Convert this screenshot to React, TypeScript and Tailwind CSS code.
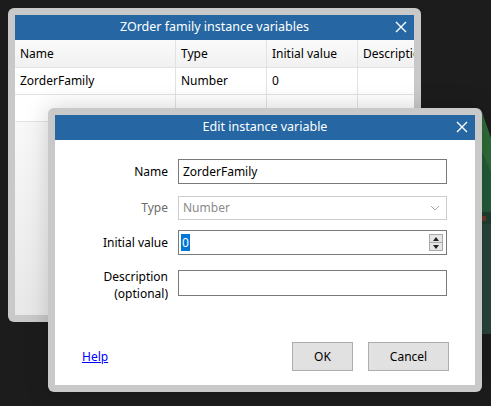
import React from "react";

const font = { fontFamily: '"Noto Sans", "Segoe UI", sans-serif' };

const CloseX: React.FC = () => (
  <svg width="12" height="12" viewBox="0 0 12 12" className="shrink-0">
    <path d="M1 1 L11 11 M11 1 L1 11" stroke="white" strokeWidth="1.4" />
  </svg>
);

const TitleBar: React.FC<{ title: string }> = ({ title }) => (
  <div className="relative h-[25px] bg-[#2667a3] flex items-center justify-center text-white text-[12.5px]">
    <span>{title}</span>
    <div className="absolute right-[7px] top-[6px]">
      <CloseX />
    </div>
  </div>
);

const columns = [
  { label: "Name", w: "w-[161px]" },
  { label: "Type", w: "w-[91px]" },
  { label: "Initial value", w: "w-[91px]" },
  { label: "Description", w: "w-[80px]" },
];

const rows = [["ZorderFamily", "Number", "0", ""], ["", "", "", ""]];

const VariablesWindow: React.FC = () => (
  <div className="absolute left-[8px] top-[8px] w-[413px] h-[314px] bg-[#c9c9c9] rounded-[6px] p-[7px]">
    <div className="h-full flex flex-col bg-white overflow-hidden">
      <TitleBar title="ZOrder family instance variables" />
      <div className="flex-1 flex flex-col bg-gradient-to-b from-white to-[#e8e8e8] overflow-hidden">
        <div className="flex h-[28px] bg-gradient-to-b from-[#fafafa] to-[#f1f1f1] border-b border-[#e2e2e2] text-[12px] text-black">
          {columns.map((c) => (
            <div key={c.label} className={`${c.w} shrink-0 flex items-center pl-[5px] border-r border-[#e2e2e2] whitespace-nowrap overflow-hidden`}>
              {c.label}
            </div>
          ))}
        </div>
        {rows.map((r, i) => (
          <div key={i} className="flex h-[27px] bg-white border-b border-[#e2e2e2] text-[12px] text-black">
            {r.map((cell, j) => (
              <div key={j} className={`${columns[j].w} shrink-0 flex items-center pl-[5px] border-r border-[#e2e2e2]`}>
                {cell}
              </div>
            ))}
          </div>
        ))}
      </div>
    </div>
  </div>
);

const Spinner: React.FC = () => (
  <div className="absolute right-[3px] top-[3px] w-[14px] h-[17px] flex flex-col border border-[#a9a9a9] bg-[#e6e6e6]">
    <div className="flex-1 flex items-center justify-center border-b border-[#a9a9a9]">
      <svg width="6" height="4" viewBox="0 0 6 4"><path d="M0 4 L3 0 L6 4Z" fill="#222" /></svg>
    </div>
    <div className="flex-1 flex items-center justify-center">
      <svg width="6" height="4" viewBox="0 0 6 4"><path d="M0 0 L6 0 L3 4Z" fill="#222" /></svg>
    </div>
  </div>
);

const EditDialog: React.FC = () => (
  <div className="absolute left-[48px] top-[108px] w-[434px] h-[284px] bg-[#c9c9c9] rounded-[6px] p-[7px] shadow-[0_0_24px_rgba(0,0,0,0.18)]">
    <div className="h-full flex flex-col bg-white text-[12px] text-black">
      <TitleBar title="Edit instance variable" />
      <div className="grid grid-cols-[113px_269px] gap-x-[10px] pt-[19px]">
        <div className="h-[25px] flex items-center justify-end">Name</div>
        <div className="h-[25px] border border-[#7a7a7a] flex items-center pl-[4px]">ZorderFamily</div>

        <div className="h-[24px] mt-[12px] flex items-center justify-end text-[#6d6d6d]">Type</div>
        <div className="h-[24px] mt-[12px] border border-[#cccccc] flex items-center justify-between pl-[4px] pr-[6px] text-[#8a8a8a]">
          <span>Number</span>
          <svg width="10" height="6" viewBox="0 0 10 6"><path d="M1 1 L5 5 L9 1" stroke="#a8a8a8" fill="none" strokeWidth="1" /></svg>
        </div>

        <div className="h-[25px] mt-[10px] flex items-center justify-end">Initial value</div>
        <div className="relative h-[25px] mt-[10px] border border-[#7a7a7a] flex items-center pl-[2px]">
          <span className="bg-[#0078d7] text-white px-[1px] leading-[17px]">0</span>
          <Spinner />
        </div>

        <div className="mt-[13px] flex flex-col items-end leading-[17px]">
          <span>Description</span>
          <span>(optional)</span>
        </div>
        <div className="h-[26px] mt-[15px] border border-[#7a7a7a]" />
      </div>
      <div className="flex-1" />
      <div className="flex items-center pl-[27px] pr-[26px] pb-[14px]">
        <span className="text-[#0000ff] underline text-[12px]">Help</span>
        <div className="flex-1" />
        <button className="w-[61px] h-[29px] bg-[#e1e1e1] border border-[#adadad] text-[12px]">OK</button>
        <button className="ml-[15px] w-[81px] h-[29px] bg-[#e1e1e1] border border-[#adadad] text-[12px]">Cancel</button>
      </div>
    </div>
  </div>
);

const App: React.FC = () => (
  <div className="relative w-[491px] h-[406px] bg-[#1c1c1c] overflow-hidden" style={font}>
    <svg className="absolute left-[482px] top-[112px]" width="9" height="222" viewBox="0 0 9 222">
      <path d="M0 0 L9 26 L9 100 L0 100Z" fill="#2f6b38" />
      <path d="M0 40 L9 60 L9 100 L0 100Z" fill="#245a3a" />
      <rect x="0" y="100" width="9" height="12" fill="#1e3e30" />
      <rect x="0" y="104" width="4" height="5" fill="#6a3a28" />
      <rect x="0" y="112" width="9" height="110" fill="#27433a" />
    </svg>
    <VariablesWindow />
    <EditDialog />
  </div>
);

export default App;
